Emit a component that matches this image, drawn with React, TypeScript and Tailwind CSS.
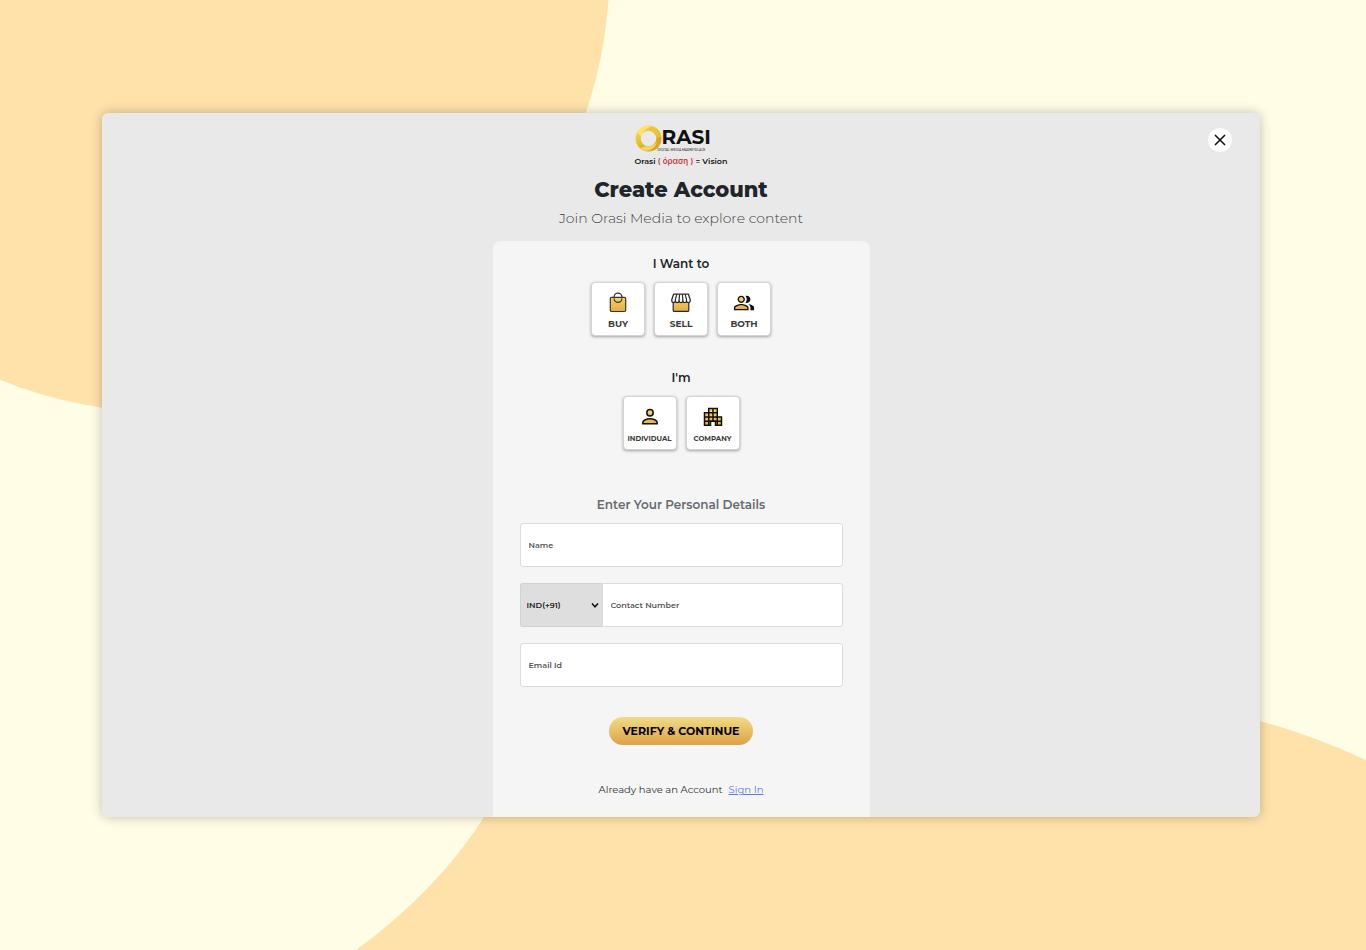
import { useState } from "react";
import type { FormEvent, ReactNode } from "react";

type Intent = "buy" | "sell" | "both";
type AccountType = "individual" | "company";

function Backdrop() {
  return (
    <svg
      className="absolute inset-0 w-full h-full -z-10"
      viewBox="0 0 1366 950"
      preserveAspectRatio="xMidYMid slice"
      aria-hidden="true"
    >
      <circle cx="167" cy="-30" r="442.5" fill="#ffe2aa" />
      <path
        d="M356 950Q437 891 484 817C620 640 1000 610 1260 721Q1314 736 1366 760V950Z"
        fill="#ffe2aa"
      />
    </svg>
  );
}

function Gradients() {
  return (
    <svg width="0" height="0" className="absolute" aria-hidden="true">
      <defs>
        <linearGradient id="gold" x1="0" y1="0" x2="0" y2="24" gradientUnits="userSpaceOnUse">
          <stop offset="0.1" stopColor="#f6e06c" />
          <stop offset="1" stopColor="#e2a03f" />
        </linearGradient>
        <linearGradient id="ring" x1="0" y1="0" x2="1" y2="1">
          <stop offset="0" stopColor="#fbe262" />
          <stop offset="0.5" stopColor="#e3b52c" />
          <stop offset="1" stopColor="#d39a1c" />
        </linearGradient>
      </defs>
    </svg>
  );
}

function RingLogo() {
  return (
    <svg width="27" height="27" viewBox="0 0 27 27" className="shrink-0" aria-hidden="true">
      <path
        d="M13.5 0.5a13 13 0 1 0 0 26a13 13 0 1 0 0-26ZM13.5 5.7a7.8 7.8 0 1 1 0 15.6a7.8 7.8 0 1 1 0-15.6Z"
        fill="url(#ring)"
        fillRule="evenodd"
      />
      <path d="M2 7.5C5 1.5 12 -0.6 17.5 1.2C13 2 8.5 5 6 11.5L2 7.5Z" fill="#fdea72" opacity="0.8" />
      <path d="M9 25.6C15 26.5 20 23 22 17C19 20.5 15 22 11 20.9L5 23.5Z" fill="#f9df68" opacity="0.8" />
      <path d="M17.5 1.2C22.5 3 26 7 26.4 12L21.2 12.5C20.5 9.5 18.5 7 15.5 6Z" fill="#f0c93c" opacity="0.7" />
    </svg>
  );
}

function BagIcon() {
  return (
    <svg width="24" height="24" viewBox="0 0 24 24" fill="none" stroke="#3d3524" aria-hidden="true">
      <rect x="4.3" y="6.3" width="15.4" height="14.2" rx="1.2" fill="url(#gold)" strokeWidth="1.2" />
      <path d="M8.1 6.5V6a3.9 3.9 0 0 1 7.8 0V6.5M8.1 7.5a3.9 3.9 0 0 0 7.8 0" strokeWidth="1.3" />
    </svg>
  );
}

function StoreIcon() {
  return (
    <svg width="24" height="24" viewBox="0 0 24 24" fill="none" stroke="#2b2b2b" strokeLinejoin="round" aria-hidden="true">
      <path d="M4.2 10.5H19.8V19.4a1 1 0 0 1-1 1H5.2a1 1 0 0 1-1-1Z" fill="url(#gold)" strokeWidth="1.2" />
      <path
        d="M4.6 3.2H19.4L21.2 8.6V10.2A1.9 1.9 0 0 1 17.5 10.2A1.9 1.9 0 0 1 13.8 10.2A1.9 1.9 0 0 1 10.1 10.2A1.9 1.9 0 0 1 6.4 10.2A1.9 1.9 0 0 1 2.8 10.2V8.6Z"
        fill="#fff"
        strokeWidth="1.3"
      />
      <path d="M6.4 10.2V8.4L7.8 3.4M10.1 10.2V8.4L10.6 3.4M13.8 10.2V8.4L13.4 3.4M17.5 10.2V8.4L16.2 3.4" strokeWidth="1.2" />
    </svg>
  );
}

function PeopleIcon() {
  return (
    <svg width="22" height="24" viewBox="0 0 24 24" aria-hidden="true">
      <path d="M9 5a3 3 0 1 0 0 6a3 3 0 1 0 0-6ZM2 19V17C3 15 7 14 9 14S15 15 16 17V19Z" fill="url(#gold)" />
      <path
        fill="#111"
        d="M16.67 13.13C18.04 14.06 19 15.32 19 17v3h4v-3c0-2.18-3.57-3.47-6.33-3.87zM15 12c2.21 0 4-1.79 4-4s-1.79-4-4-4c-.47 0-.91.1-1.33.24C14.5 5.27 15 6.58 15 8s-.5 2.73-1.33 3.76c.42.14.86.24 1.33.24zM9 12c2.21 0 4-1.79 4-4s-1.79-4-4-4-4 1.79-4 4 1.79 4 4 4zm0-6.5c1.4 0 2.5 1.1 2.5 2.5s-1.1 2.5-2.5 2.5S6.5 9.4 6.5 8s1.1-2.5 2.5-2.5zM9 13c-2.67 0-8 1.34-8 4v3h16v-3c0-2.66-5.33-4-8-4zm6.5 5.5h-13V17C2.7 16.29 6.3 14.5 9 14.5s6.3 1.79 6.5 2.5v1.5z"
      />
    </svg>
  );
}

function PersonIcon() {
  return (
    <svg width="24" height="24" viewBox="0 0 24 24" fill="url(#gold)" stroke="#111" strokeWidth="1.5" aria-hidden="true">
      <circle cx="12" cy="7.7" r="3.2" />
      <path d="M4.8 18.8V17.4C4.8 15 9 13.8 12 13.8S19.2 15 19.2 17.4V18.8Z" />
    </svg>
  );
}

function BuildingIcon() {
  return (
    <svg width="24" height="24" viewBox="0 0 24 24" fill="url(#gold)" stroke="#111" strokeWidth="1.5" aria-hidden="true">
      <path d="M3.5 7.7H7.75V3.5H16.25V12H20.5V20.2H14.5V16.2H9.5V20.2H3.5Z" />
      <path d="M3.5 12H16.25M3.5 16.2H20.5M7.75 7.7H16.25M7.75 7.7V20.2M12 3.5V16.2M16.25 12V20.2" />
    </svg>
  );
}

interface TileProps {
  icon: ReactNode;
  label: string;
  small?: boolean;
  selected: boolean;
  onClick: () => void;
}

function Tile({ icon, label, small, selected, onClick }: TileProps) {
  return (
    <button
      type="button"
      aria-pressed={selected}
      onClick={onClick}
      className="w-[54px] h-[54px] pt-2 flex flex-col items-center rounded-[4px] border border-[#d4d4d4] bg-white shadow-[0_1px_3px_rgba(0,0,0,0.35)] aria-pressed:border-[#e2a03f]"
    >
      {icon}
      <span
        className={
          small
            ? "mt-1 text-[7px] leading-3 font-bold text-[#3c3c3c]"
            : "mt-[3px] text-[9px] leading-3 font-bold text-[#3c3c3c]"
        }
      >
        {label}
      </span>
    </button>
  );
}

const inputClass =
  "w-full h-11 px-2 border border-[#d9dbde] bg-white text-[8px] font-semibold text-[#333] placeholder:text-[#555] outline-none focus:border-[#e2a03f]";

export default function App() {
  const [intent, setIntent] = useState<Intent | null>(null);
  const [accountType, setAccountType] = useState<AccountType | null>(null);
  const [open, setOpen] = useState(true);

  const submit = (e: FormEvent) => e.preventDefault();

  return (
    <div className="relative isolate min-h-screen overflow-hidden bg-[#fffde5] pt-[113px] pb-[133px] pl-[102px] pr-[106px] font-[Montserrat,Inter,sans-serif] text-[#212529]">
      <Backdrop />
      <Gradients />

      {open && (
        <main className="relative flex flex-col items-center overflow-hidden rounded-md bg-[#e9e9e9] pt-3 shadow-[0_0_12px_rgba(0,0,0,0.25)]">
          <button
            type="button"
            aria-label="Close"
            onClick={() => setOpen(false)}
            className="absolute top-[15px] right-7 w-6 h-6 rounded-full bg-white flex items-center justify-center"
          >
            <svg width="12" height="12" viewBox="0 0 12 12" stroke="#111" strokeWidth="1.6" aria-hidden="true">
              <path d="M1 1L11 11M11 1L1 11" />
            </svg>
          </button>

          {/* Logo */}
          <div>
            <div className="flex h-7">
              <RingLogo />
              <div className="flex flex-col">
                <span className="text-[20px] leading-6 font-bold text-[#111]">RASI</span>
                <span className="-ml-1 w-0 text-[3px] leading-[3px] font-medium whitespace-nowrap text-[#222]">
                  DIGITAL MEDIA MARKETPLACE
                </span>
              </div>
            </div>
            <p className="mt-[2px] text-[8px] leading-3 font-semibold text-[#111] whitespace-nowrap">
              Orasi <span className="text-[#c5393f]">( όραση )</span> = Vision
            </p>
          </div>

          <h1 className="mt-[9px] text-[21px] leading-7 font-extrabold">Create Account</h1>
          <p className="mt-1 text-[14px] leading-5 font-light text-[#444]">
            Join Orasi Media to explore content
          </p>

          <form
            onSubmit={submit}
            className="mt-[13px] w-full max-w-[377px] px-[27px] pt-[13px] pb-[17px] flex flex-col items-center rounded-t-lg bg-[#f5f5f5]"
          >
            <h2 className="text-[12px] leading-5 font-semibold">I Want to</h2>
            <div className="mt-2 flex gap-[9px]">
              <Tile icon={<BagIcon />} label="BUY" selected={intent === "buy"} onClick={() => setIntent("buy")} />
              <Tile icon={<StoreIcon />} label="SELL" selected={intent === "sell"} onClick={() => setIntent("sell")} />
              <Tile icon={<PeopleIcon />} label="BOTH" selected={intent === "both"} onClick={() => setIntent("both")} />
            </div>

            <h2 className="mt-8 text-[12px] leading-5 font-semibold">I'm</h2>
            <div className="mt-2 flex gap-[9px]">
              <Tile
                small
                icon={<PersonIcon />}
                label="INDIVIDUAL"
                selected={accountType === "individual"}
                onClick={() => setAccountType("individual")}
              />
              <Tile
                small
                icon={<BuildingIcon />}
                label="COMPANY"
                selected={accountType === "company"}
                onClick={() => setAccountType("company")}
              />
            </div>

            <h2 className="mt-[45px] text-[12px] leading-5 font-semibold text-[#666b70]">
              Enter Your Personal Details
            </h2>
            <div className="mt-2 w-full flex flex-col gap-4">
              <input type="text" aria-label="Name" placeholder="Name" className={`${inputClass} rounded-[3px]`} />
              <div className="flex">
                <div className="relative w-[82px] shrink-0">
                  <select
                    aria-label="Country code"
                    className="w-full h-11 pl-[6px] appearance-none rounded-l-[3px] border border-r-0 border-[#d0d2d4] bg-[#dedede] text-[8px] font-semibold text-[#222] outline-none"
                  >
                    <option>IND(+91)</option>
                  </select>
                  <svg
                    className="absolute right-[3px] top-[19px] pointer-events-none"
                    width="8"
                    height="7"
                    viewBox="0 0 8 7"
                    fill="none"
                    stroke="#111"
                    strokeWidth="1.5"
                    aria-hidden="true"
                  >
                    <path d="M1 1.5L4 4.8L7 1.5" />
                  </svg>
                </div>
                <input
                  type="tel"
                  aria-label="Contact Number"
                  placeholder="Contact Number"
                  className={`${inputClass} rounded-r-[3px]`}
                />
              </div>
              <input type="email" aria-label="Email Id" placeholder="Email Id" className={`${inputClass} rounded-[3px]`} />
            </div>

            <button
              type="submit"
              className="mt-[30px] h-7 w-36 rounded-full bg-linear-to-b from-[#eedd86] to-[#e0a044] text-[11px] font-bold text-black whitespace-nowrap"
            >
              VERIFY &amp; CONTINUE
            </button>

            <p className="mt-[35px] text-[10px] leading-5 text-[#333]">
              Already have an Account
              <a href="#signin" className="ml-[6px] text-[#5b76f2] underline">
                Sign In
              </a>
            </p>
          </form>
        </main>
      )}
    </div>
  );
}
